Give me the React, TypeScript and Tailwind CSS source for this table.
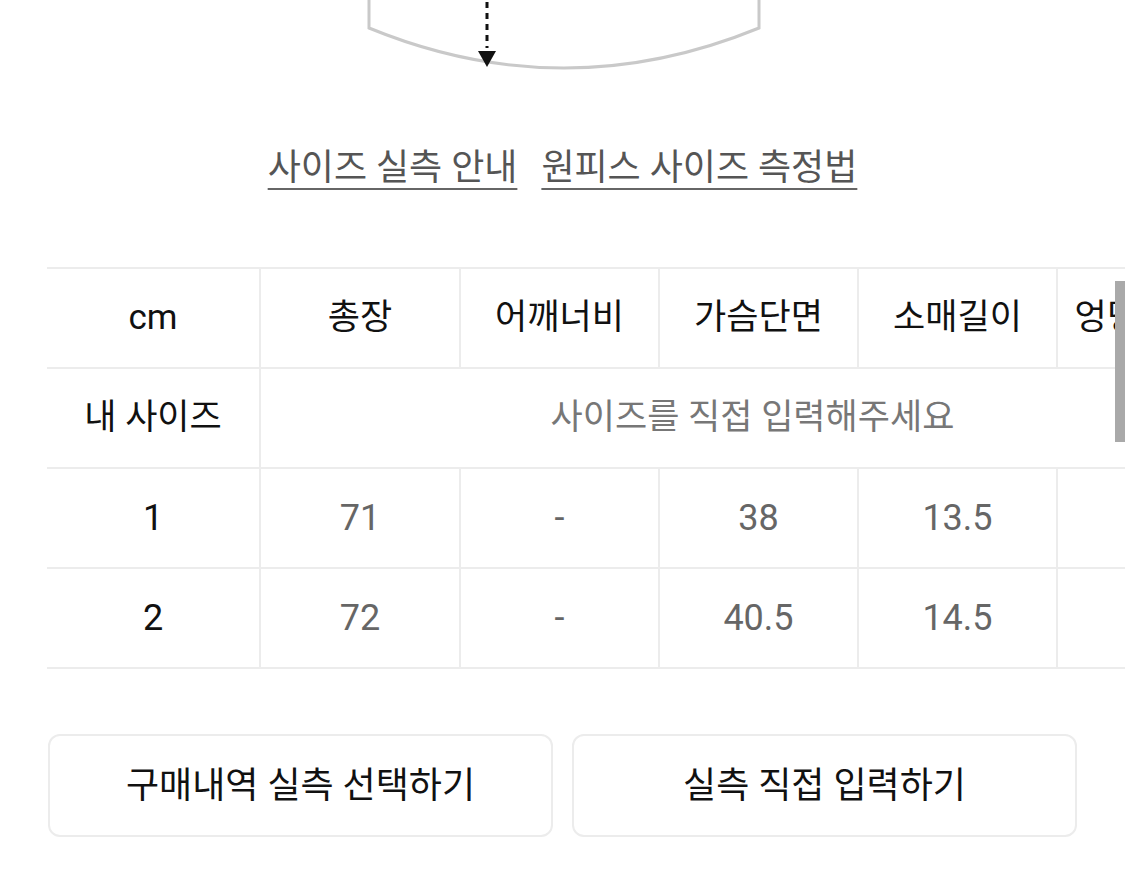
import React from "react";

const font = { fontFamily: 'Roboto, "Noto Sans CJK KR", sans-serif' };

const headers = ["cm", "총장", "어깨너비", "가슴단면", "소매길이", "엉덩이단면"];
const rows = [
  ["1", "71", "-", "38", "13.5", "-"],
  ["2", "72", "-", "40.5", "14.5", "-"],
];

export default function App() {
  return (
    <div className="w-[1125px] h-[884px] bg-white overflow-hidden" style={font}>
      <svg width="1125" height="80" className="block">
        <path d="M369 0 V28 Q564 108 759 28 V0" fill="none" stroke="#c9c9c9" strokeWidth="3" />
        <line x1="487" y1="2" x2="487" y2="48" stroke="#111" strokeWidth="3" strokeDasharray="6 5" />
        <polygon points="478,51 496,51 487,67" fill="#111" />
      </svg>

      <div className="mt-[66px] flex justify-center gap-[24px] text-[36px] leading-[44px] text-[#555]">
        <span className="underline decoration-2 underline-offset-[8px] decoration-[#666]">사이즈 실측 안내</span>
        <span className="underline decoration-2 underline-offset-[8px] decoration-[#666]">원피스 사이즈 측정법</span>
      </div>

      <div className="relative mt-[77px] ml-[47px] overflow-hidden">
        <table className="table-fixed border-collapse w-[1205px] text-[35px] text-center">
          <colgroup>
            <col className="w-[213px]" />
            <col className="w-[200px]" />
            <col className="w-[199px]" />
            <col className="w-[199px]" />
            <col className="w-[199px]" />
            <col className="w-[195px]" />
          </colgroup>
          <tbody>
            <tr className="h-[100px]">
              {headers.map((h, i) => (
                <td
                  key={h}
                  className={`border-y-2 border-[#ececec] text-[#111] whitespace-nowrap overflow-hidden ${i > 0 ? "border-l-2" : ""}`}
                >
                  {h}
                </td>
              ))}
            </tr>
            <tr className="h-[100px]">
              <td className="border-y-2 border-[#ececec] text-[#111]">내 사이즈</td>
              <td colSpan={5} className="border-y-2 border-l-2 border-[#ececec] text-[#777]">
                <span className="pr-[8px]">사이즈를 직접 입력해주세요</span>
              </td>
            </tr>
            {rows.map((r) => (
              <tr key={r[0]} className="h-[100px]">
                {r.map((c, i) => (
                  <td
                    key={i}
                    className={`border-y-2 border-[#ececec] text-[36px] ${i === 0 ? "text-[#111]" : "border-l-2 text-[#666]"}`}
                  >
                    {c}
                  </td>
                ))}
              </tr>
            ))}
          </tbody>
        </table>
        <div className="absolute right-0 top-[14px] w-[10px] h-[161px] bg-[#a9a9a9]" />
      </div>

      <div className="mt-[65px] mx-[48px] flex gap-[19px]">
        <button className="flex-1 h-[103px] rounded-[12px] border-2 border-[#ececec] text-[36px] text-[#111]">
          구매내역 실측 선택하기
        </button>
        <button className="flex-1 h-[103px] rounded-[12px] border-2 border-[#ececec] text-[36px] text-[#111]">
          실측 직접 입력하기
        </button>
      </div>
    </div>
  );
}
